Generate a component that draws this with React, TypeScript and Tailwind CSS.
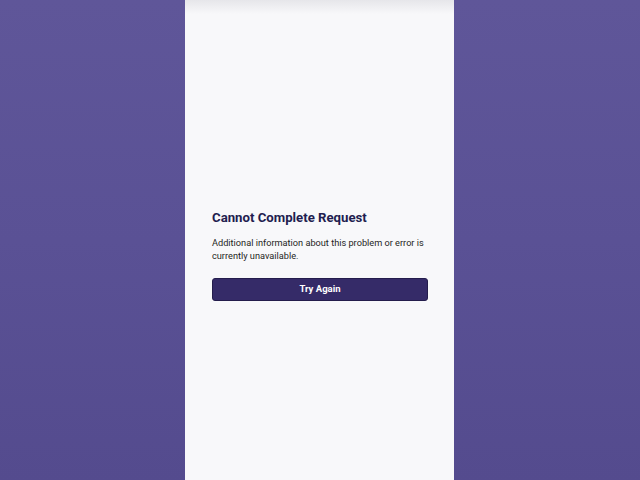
import React from "react";

const App: React.FC = () => {
  return (
    <div className="w-[640px] h-[480px] flex bg-gradient-to-b from-[#5f5699] via-[#5a5195] to-[#544b8e] font-['Roboto',sans-serif]">
      <div className="relative ml-[185px] w-[269px] h-full bg-[#f8f8fa] flex flex-col justify-center pl-[27px] pr-[26px] pt-[29px]">
        {/* header shadow strip */}
        <div className="absolute top-0 left-0 right-0 h-[14px] bg-gradient-to-b from-[#e6e6ea] to-[#f8f8fa]" />
        <h1 className="text-[13.2px] font-bold text-[#221d4f] leading-[18px]">
          Cannot Complete Request
        </h1>
        <p className="mt-[9px] text-[9.2px] leading-[13.5px] text-[#1f1f24]">
          Additional information about this problem or error is currently unavailable.
        </p>
        <button className="mt-[15px] h-[23px] w-full rounded-[3px] bg-[#352b68] border border-[#241d4c] text-white text-[9.5px] font-bold">
          Try Again
        </button>
      </div>
    </div>
  );
};

export default App;
